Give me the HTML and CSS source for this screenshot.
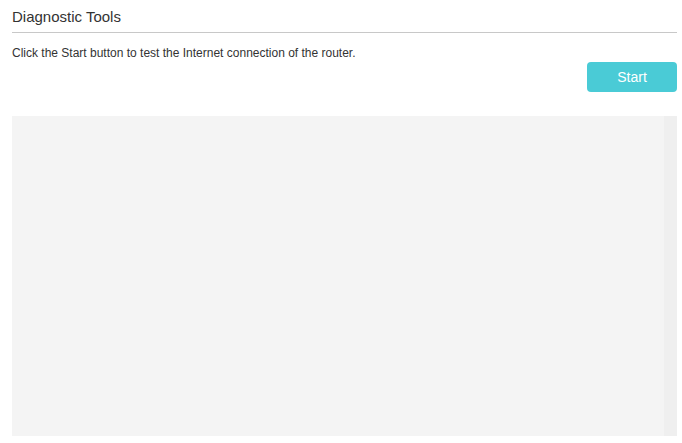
FILE: index.html
```html
<!DOCTYPE html>
<html>
<head>
<meta charset="utf-8">
<link rel="stylesheet" href="styles.css">
</head>
<body>
<div class="page">
  <h2 class="title">Diagnostic Tools</h2>
  <p class="desc">Click the Start button to test the Internet connection of the router.</p>
  <div class="actions"><button class="btn">Start</button></div>
  <div class="output">
    <div class="output-main"></div>
    <div class="output-bar"></div>
  </div>
</div>
</body>
</html>
```
FILE: styles.css
```css
html, body {
  margin: 0;
  padding: 0;
  background: #fff;
}
.page {
  padding: 0 5px 0 12px;
  font-family: "Liberation Sans", Arial, sans-serif;
  color: #333;
}
.title {
  margin: 0;
  font-size: 15px;
  font-weight: normal;
  line-height: 18px;
  padding-top: 8px;
  padding-bottom: 6px;
  border-bottom: 1px solid #c8c8c8;
  color: #333;
}
.desc {
  margin: 0;
  padding-top: 13px;
  font-size: 12px;
  line-height: 15px;
  color: #333;
}
.actions {
  display: flex;
  justify-content: flex-end;
  margin-top: 1px;
}
.btn {
  width: 90px;
  height: 30px;
  border: none;
  border-radius: 4px;
  background: #4acbd6;
  color: #fff;
  font-family: "Liberation Sans", Arial, sans-serif;
  font-size: 14px;
  padding: 0;
}
.output {
  margin-top: 24px;
  height: 320px;
  display: flex;
}
.output-main {
  flex: 1;
  background: #f4f4f4;
}
.output-bar {
  width: 13px;
  background: #efefef;
}
```
